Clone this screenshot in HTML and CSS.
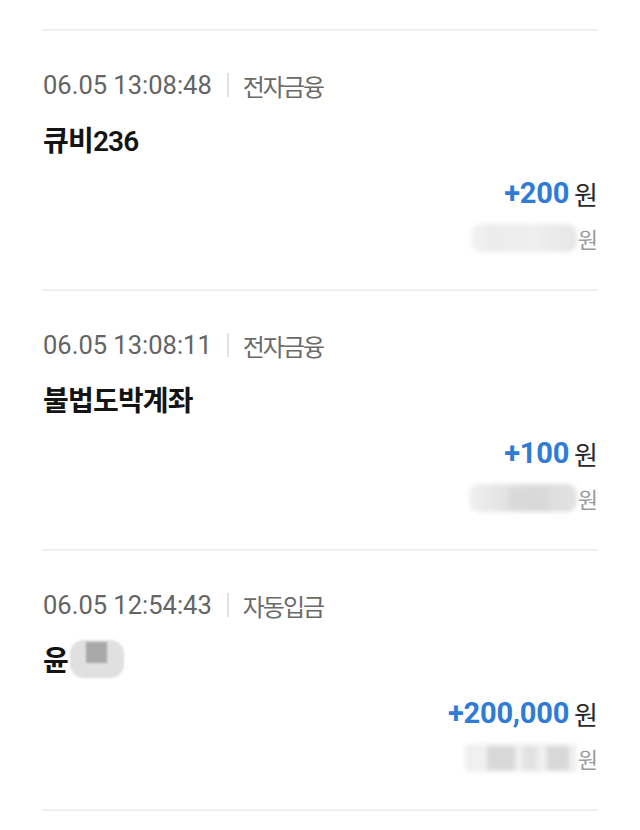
FILE: index.html
```html
<!DOCTYPE html>
<html lang="ko">
<head>
<meta charset="utf-8">
<link rel="stylesheet" href="styles.css">
</head>
<body>
<div class="list">
  <div class="item">
    <div class="meta"><span class="time">06.05 13:08:48</span><span class="bar"></span><span class="kind">전자금융</span></div>
    <div class="title">큐비236</div>
    <div class="amount"><span class="num">+200</span><span class="won">원</span></div>
    <div class="balance"><span class="mask mask-a"></span><span class="won-s">원</span></div>
  </div>
  <div class="item">
    <div class="meta"><span class="time">06.05 13:08:11</span><span class="bar"></span><span class="kind">전자금융</span></div>
    <div class="title">불법도박계좌</div>
    <div class="amount"><span class="num">+100</span><span class="won">원</span></div>
    <div class="balance"><span class="mask mask-b"><span class="mid"></span></span><span class="won-s">원</span></div>
  </div>
  <div class="item">
    <div class="meta"><span class="time">06.05 12:54:43</span><span class="bar"></span><span class="kind">자동입금</span></div>
    <div class="title">윤<span class="name-mask"><span class="sq"></span></span></div>
    <div class="amount"><span class="num">+200,000</span><span class="won">원</span></div>
    <div class="balance"><span class="mask mask-c"><span class="p1"></span><span class="p2"></span><span class="p3"></span></span><span class="won-s">원</span></div>
  </div>
  <div class="end"></div>
</div>
</body>
</html>
```

FILE: styles.css
```css
html, body {
  margin: 0;
  padding: 0;
  background: #ffffff;
}
body {
  font-family: Roboto, "Noto Sans CJK KR", sans-serif;
  color: #111;
}
.list {
  padding: 29px 42px 0 42px;
}
.item {
  border-top: 2px solid #efefef;
  padding: 27px 1px 33px 1px;
}
.end {
  border-top: 2px solid #efefef;
}
.meta {
  height: 54px;
  display: flex;
  align-items: center;
  color: #666;
}
.time {
  font-size: 25.5px;
  color: #646464;
}
.bar {
  width: 2px;
  height: 24px;
  background: #e2e2e2;
  margin: 0 14px 0 15px;
}
.kind {
  font-size: 24px;
  letter-spacing: -2px;
  color: #6a6a6a;
}
.title {
  height: 54px;
  display: flex;
  align-items: center;
  font-size: 28px;
  font-weight: 600;
  color: #141414;
  letter-spacing: -0.8px;
}
.amount {
  height: 54px;
  display: flex;
  align-items: center;
  justify-content: flex-end;
}
.num {
  font-size: 29px;
  font-weight: 700;
  color: #2f7bd6;
  letter-spacing: -0.2px;
}
.won {
  font-size: 26px;
  color: #2a2a2a;
  margin-left: 5px;
  letter-spacing: -1px;
}
.balance {
  height: 36px;
  display: flex;
  align-items: center;
  justify-content: flex-end;
}
.won-s {
  font-size: 22px;
  color: #9a9a9a;
  letter-spacing: -1px;
}
.mask {
  position: relative;
  display: inline-block;
  height: 28px;
  margin-right: 1px;
  filter: blur(2px);
  border-radius: 10px;
}
.mask-a {
  width: 106px;
  background: linear-gradient(90deg, #f2f2f2 0%, #ececec 20%, #efefef 60%, #e6e6e6 100%);
}
.mask-b {
  width: 108px;
  background: linear-gradient(90deg, #f0f0f0 0%, #e4e4e4 30%, #dcdcdc 60%, #e2e2e2 100%);
}
.mask-b .mid {
  position: absolute;
  left: 40px;
  top: 4px;
  width: 40px;
  height: 22px;
  background: #d9d9d9;
}
.mask-c {
  width: 112px;
  background: #f0f0f0;
  border-radius: 4px;
}
.mask-c span {
  position: absolute;
  top: 2px;
  height: 24px;
  background: #d8d8d8;
}
.mask-c .p1 { left: 22px; width: 28px; }
.mask-c .p2 { left: 58px; width: 14px; background: #e2e2e2; }
.mask-c .p3 { left: 82px; width: 22px; }
.name-mask {
  position: relative;
  display: inline-block;
  width: 54px;
  height: 38px;
  margin-left: 2px;
  background: #e0e0e0;
  border-radius: 14px;
  filter: blur(1px);
}
.name-mask .sq {
  position: absolute;
  left: 16px;
  top: 2px;
  width: 21px;
  height: 21px;
  background: #a8a8a8;
}
```
